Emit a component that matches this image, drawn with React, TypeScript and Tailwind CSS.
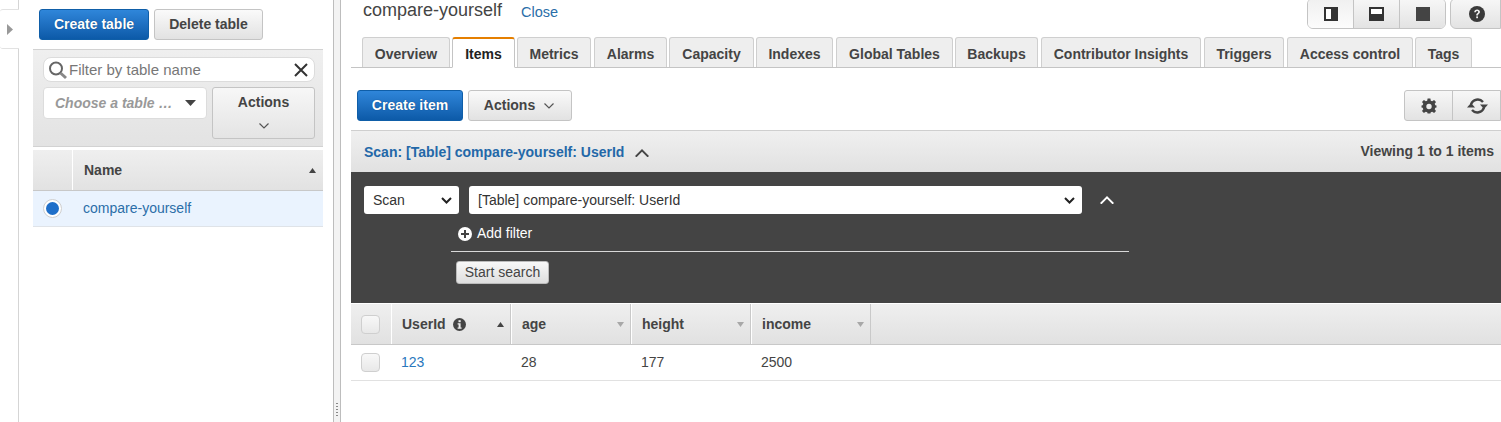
import React from "react";

const btnGrey = "rounded-[3px] border border-[#c4c4c4] bg-gradient-to-b from-[#fafafa] to-[#e2e2e2] font-bold text-[#444] text-[14px] flex items-center justify-center";
const btnBlue = "rounded-[3px] border border-[#0f5ea8] bg-gradient-to-b from-[#2f86da] to-[#0c5aa8] font-bold text-white text-[14px] flex items-center justify-center [text-shadow:0_0_1px_#003a70]";

const Chevron = ({ up = false, w = 11, color = "#555", sw = 1.5 }: { up?: boolean; w?: number; color?: string; sw?: number }) => (
  <svg width={w} height={w * 0.6} viewBox="0 0 10 6" fill="none">
    <path d={up ? "M0.5 5.5L5 1L9.5 5.5" : "M0.5 0.5L5 5L9.5 0.5"} stroke={color} strokeWidth={sw} />
  </svg>
);

const Caret = ({ up = false, color = "#444" }: { up?: boolean; color?: string }) => (
  <svg width="9" height="5" viewBox="0 0 9 5">
    <path d={up ? "M4.5 0L8 5H1Z" : "M1 0H8L4.5 5Z"} fill={color} />
  </svg>
);

const tabs: [string, number, number][] = [
  ["Overview", 88, 2],
  ["Items", 63, 2],
  ["Metrics", 74, 3],
  ["Alarms", 73, 2],
  ["Capacity", 85, 2],
  ["Indexes", 77, 3],
  ["Global Tables", 117, 2],
  ["Backups", 83, 3],
  ["Contributor Insights", 160, 3],
  ["Triggers", 80, 3],
  ["Access control", 126, 2],
  ["Tags", 57, 0],
];

const Th = ({ label, w, info = false, active = false }: { label: string; w: number; info?: boolean; active?: boolean }) => (
  <div style={{ width: w }} className="h-full flex items-center pl-[10px] pr-[5px] border-r border-r-[#c9c9c9] border-l border-l-white font-bold text-[#444] text-[14px]">
    <span>{label}</span>
    {info && (
      <svg className="ml-[7px]" width="13" height="13" viewBox="0 0 13 13">
        <circle cx="6.5" cy="6.5" r="6.5" fill="#444" />
        <rect x="5.5" y="2.2" width="2.2" height="2" fill="#eee" />
        <path d="M4.6 5.3H7.6V9.5H8.6V10.7H4.6V9.5H5.6V6.5H4.6Z" fill="#eee" />
      </svg>
    )}
    <span className="ml-auto flex">
      <Caret up={active} color={active ? "#444" : "#a8a8a8"} />
    </span>
  </div>
);

const Checkbox = () => (
  <div className="w-[19px] h-[19px] rounded-[4px] border border-[#cfcfcf] bg-gradient-to-b from-[#f8f8f8] to-[#e8e8e8]" />
);

export default function App() {
  return (
    <div className="w-[1501px] h-[422px] overflow-hidden bg-white flex font-['Liberation_Sans',Arial,sans-serif] text-[14px] text-[#444]">
      {/* nav strip */}
      <div className="w-[19px] h-full border-r border-[#d5d5d5] shrink-0 pt-[9px]">
        <div className="w-[19px] h-[40px] bg-white border-y border-[#e2e2e2] rounded-l-[3px] flex items-center pl-[7px]">
          <svg width="6" height="11" viewBox="0 0 6 11"><path d="M0 0L6 5.5L0 11Z" fill="#999" /></svg>
        </div>
      </div>

      {/* left panel */}
      <div className="w-[314px] shrink-0 h-full">
        <div className="flex gap-[5px] pt-[9px] pl-[20px]">
          <button className={`${btnBlue} w-[110px] h-[31px]`}>Create table</button>
          <button className={`${btnGrey} w-[109px] h-[31px]`}>Delete table</button>
        </div>
        <div className="ml-[14px] w-[290px] mt-[9px] h-[98px] border-y border-[#d2d2d2] bg-gradient-to-b from-[#efefef] to-[#e3e3e3] pl-[10px] pr-[8px] pt-[7px]">
          <div className="h-[25px] bg-white rounded-[8px] border border-[#dcdcdc] flex items-center pl-[4px] pr-[6px]">
            <svg width="20" height="20" viewBox="0 0 20 20" fill="none">
              <circle cx="8" cy="8.5" r="6" stroke="#666" strokeWidth="2" />
              <path d="M12.5 13L18 18" stroke="#888" strokeWidth="3" />
            </svg>
            <span className="ml-[1px] mt-[1px] text-[15px] text-[#777]">Filter by table name</span>
            <svg className="ml-auto" width="14" height="14" viewBox="0 0 14 14"><path d="M1 1L13 13M13 1L1 13" stroke="#333" strokeWidth="2" /></svg>
          </div>
          <div className="flex gap-[5px] mt-[5px] items-start">
            <div className="w-[164px] h-[32px] bg-white rounded-[4px] border border-[#dcdcdc] flex items-center pl-[11px] pr-[10px] font-bold italic text-[#999]">
              <span>Choose a table …</span>
              <svg className="ml-auto" width="11" height="6" viewBox="0 0 11 6"><path d="M0 0H11L5.5 6Z" fill="#444" /></svg>
            </div>
            <button className="w-[103px] h-[52px] rounded-[3px] border border-[#c4c4c4] bg-gradient-to-b from-[#f7f7f7] to-[#e4e4e4] font-bold text-[#444] flex flex-col items-center pt-[4px]">
              <span>Actions</span>
              <span className="mt-[10px] flex"><Chevron w={10} sw={1.2} /></span>
            </button>
          </div>
        </div>
        <div className="ml-[14px] w-[290px] mt-[3px] h-[41px] flex items-stretch bg-gradient-to-b from-[#efefef] to-[#e2e2e2] border-b border-[#c8c8c8]">
          <div className="w-[40px] border-r border-white" />
          <div className="flex-1 flex items-center pl-[11px] pr-[6px] font-bold text-[#444]">
            <span>Name</span>
            <span className="ml-auto flex"><Caret up /></span>
          </div>
        </div>
        <div className="ml-[14px] w-[290px] h-[36px] bg-[#eaf3fe] border-b border-[#dfe3e8] flex items-center pl-[10px]">
          <div className="w-[19px] h-[19px] rounded-full bg-white border border-[#cfcfcf] flex items-center justify-center">
            <div className="w-[13px] h-[13px] rounded-full bg-[#1f6fc9]" />
          </div>
          <span className="ml-[21px] text-[#2a6ea8]">compare-yourself</span>
        </div>
      </div>

      {/* divider */}
      <div className="w-[8px] h-full shrink-0 border-x border-[#bdbdbd] bg-[#f3f3f3] flex flex-col items-center justify-end pb-[6px] gap-[2px]">
        {[0, 1, 2, 3, 4].map((i) => (
          <div key={i} className="w-[2px] h-[1px] bg-[#888]" />
        ))}
      </div>

      {/* main */}
      <div className="flex-1 min-w-0 pl-[10px]">
        <div className="h-[37px] flex items-start pl-[12px]">
          <span className="text-[18px] leading-[20px] text-[#444]">compare-yourself</span>
          <span className="ml-[19px] mt-[4px] text-[14.5px] leading-[17px] text-[#2a6ea8]">Close</span>
          <div className="ml-auto flex -mt-[2px]">
            <div className="flex h-[31px] w-[139px] rounded-[6px] border border-[#c4c4c4] overflow-hidden">
              <div className="w-[46px] flex items-center justify-center border-r border-[#c4c4c4] bg-gradient-to-b from-[#f0f0f0] to-[#fcfcfc]">
                <svg width="14" height="14" viewBox="0 0 14 14"><path d="M0 0H14V14H0Z" fill="#333" /><rect x="2" y="2" width="5" height="10" fill="#fff" /></svg>
              </div>
              <div className="w-[46px] flex items-center justify-center border-r border-[#c4c4c4] bg-gradient-to-b from-[#f7f7f7] to-[#e3e3e3]">
                <svg width="15" height="14" viewBox="0 0 15 14"><path d="M0 0H15V14H0Z" fill="#333" /><rect x="2" y="2" width="11" height="5" fill="#fff" /></svg>
              </div>
              <div className="flex-1 flex items-center justify-center bg-gradient-to-b from-[#f7f7f7] to-[#e3e3e3]">
                <div className="w-[14px] h-[14px] bg-[#444]" />
              </div>
            </div>
            <div className="ml-[4px] w-[51px] h-[31px] shrink-0 rounded-l-[6px] border border-[#c4c4c4] bg-gradient-to-b from-[#f7f7f7] to-[#e3e3e3] flex items-center pl-[18px]">
              <svg width="16" height="16" viewBox="0 0 16 16">
                <circle cx="8" cy="8" r="8" fill="#3a3a3a" />
                <path d="M5.2 6.2C5.3 4.6 6.5 3.6 8.1 3.6C9.8 3.6 11 4.6 11 6C11 7.9 8.9 7.8 8.9 9.6H7.2C7.2 7.2 9.1 7.3 9.1 6.1C9.1 5.5 8.7 5.1 8 5.1C7.4 5.1 7 5.5 6.9 6.2Z" fill="#eee" />
                <rect x="7.2" y="10.4" width="1.8" height="1.8" fill="#eee" />
              </svg>
            </div>
          </div>
        </div>

        {/* tabs */}
        <div className="h-[31px] border-b border-[#c4c4c4] flex pl-[11px] items-start">
          {tabs.map(([label, w, gap]) => {
            const active = label === "Items";
            return (
              <div
                key={label}
                style={{ width: w, marginRight: gap }}
                className={
                  active
                    ? "h-[31px] shrink-0 bg-white border border-[#c4c4c4] border-b-white border-t-2 border-t-[#e57f00] rounded-t-[3px] flex items-center justify-center pt-[3px] font-bold text-[#222] text-[14px] relative z-10"
                    : "h-[30px] shrink-0 bg-[#eee] border border-[#cfcfcf] border-b-0 rounded-t-[3px] flex items-center justify-center pt-[3px] font-bold text-[#444] text-[14px]"
                }
              >
                {label}
              </div>
            );
          })}
        </div>

        {/* toolbar */}
        <div className="h-[62px] flex items-start pt-[22px] pl-[6px]">
          <button className={`${btnBlue} w-[106px] h-[31px]`}>Create item</button>
          <button className={`${btnGrey} ml-[5px] w-[104px] h-[31px] pr-[2px]`}>
            Actions<span className="ml-[9px] flex"><Chevron w={10} sw={1.2} /></span>
          </button>
          <div className="ml-auto flex h-[31px] w-[97px] rounded-l-[3px] border border-[#c4c4c4] bg-gradient-to-b from-[#f7f7f7] to-[#e3e3e3]">
            <div className="w-[48px] border-r border-[#c4c4c4] flex items-center justify-center">
              <svg width="16" height="16" viewBox="0 0 16 16">
                <path fill="#444" fillRule="evenodd" d="M6.6 0.5H9.4L9.8 2.7L11.2 3.3L13.1 2L15 3.9L13.7 5.8L14.3 7.2L15.5 7.6V9.4L14.3 9.8L13.7 11.2L15 13.1L13.1 15L11.2 13.7L9.8 14.3L9.4 15.5H6.6L6.2 14.3L4.8 13.7L2.9 15L1 13.1L2.3 11.2L1.7 9.8L0.5 9.4V7.6L1.7 7.2L2.3 5.8L1 3.9L2.9 2L4.8 3.3L6.2 2.7ZM8 5.8A2.7 2.7 0 1 0 8 11.2A2.7 2.7 0 1 0 8 5.8Z" />
              </svg>
            </div>
            <div className="flex-1 flex items-center justify-center pl-[2px]">
              <svg width="21" height="18" viewBox="0 0 21 18" fill="none">
                <path d="M4 7.5A7 7 0 0 1 16 5" stroke="#444" strokeWidth="2.4" />
                <path d="M17 10.5A7 7 0 0 1 5 13" stroke="#444" strokeWidth="2.4" />
                <path d="M13 7.5H21L17 12Z" fill="#444" />
                <path d="M0 10.5H8L4 6Z" fill="#444" />
              </svg>
            </div>
          </div>
        </div>

        {/* scan bar */}
        <div className="h-[42px] border-t border-[#cfcfcf] bg-gradient-to-b from-[#f0f0f0] to-[#e1e1e1] flex items-center pl-[13px] pr-[7px] font-bold">
          <span className="text-[#2368a8] text-[14px] mt-[2px]">Scan: [Table] compare-yourself: UserId</span>
          <span className="ml-[11px] mt-[3px] flex"><Chevron up w={14} color="#444" sw={1.4} /></span>
          <span className="ml-auto text-[#444] text-[14px]">Viewing 1 to 1 items</span>
        </div>

        {/* dark panel */}
        <div className="h-[131px] bg-[#444] pt-[14px] pl-[13px]">
          <div className="flex items-center">
            <div className="w-[95px] h-[28px] bg-white rounded-[3px] flex items-center pl-[9px] pr-[7px] text-[#333]">
              <span>Scan</span>
              <svg className="ml-auto" width="11" height="7" viewBox="0 0 11 7" fill="none"><path d="M1 1L5.5 5.5L10 1" stroke="#222" strokeWidth="2" /></svg>
            </div>
            <div className="ml-[10px] w-[613px] h-[28px] bg-white rounded-[3px] flex items-center pl-[9px] pr-[7px] text-[#333]">
              <span>[Table] compare-yourself: UserId</span>
              <svg className="ml-auto" width="11" height="7" viewBox="0 0 11 7" fill="none"><path d="M1 1L5.5 5.5L10 1" stroke="#222" strokeWidth="2" /></svg>
            </div>
            <span className="ml-[18px] flex"><Chevron up w={14} color="#fff" sw={1.4} /></span>
          </div>
          <div className="ml-[87px] w-[678px] mt-[9px] h-[29px] border-b border-[#d8d8d8] flex items-start pl-[7px] text-white">
            <svg className="mt-[4px]" width="14" height="14" viewBox="0 0 14 14">
              <circle cx="7" cy="7" r="7" fill="#fff" />
              <path d="M6 3H8V6H11V8H8V11H6V8H3V6H6Z" fill="#444" />
            </svg>
            <span className="ml-[5px]">Add filter</span>
          </div>
          <button className="ml-[92px] mt-[9px] w-[93px] h-[23px] rounded-[3px] border border-[#bbb] bg-gradient-to-b from-[#f8f8f8] to-[#dedede] text-[#444] text-[14px] flex items-center justify-center">
            Start search
          </button>
        </div>

        {/* table */}
        <div className="h-[41px] mt-[1px] flex items-stretch bg-gradient-to-b from-[#efefef] to-[#e1e1e1] border-b border-[#c8c8c8]">
          <div className="w-[40px] flex items-center pl-[10px]"><Checkbox /></div>
          <Th label="UserId" w={120} info active />
          <Th label="age" w={120} />
          <Th label="height" w={120} />
          <Th label="income" w={120} />
        </div>
        <div className="h-[36px] border-b border-[#e1e1e1] flex items-center text-[#444]">
          <div className="w-[40px] pl-[10px]"><Checkbox /></div>
          <div className="w-[120px] pl-[10px] text-[#2a78bd]">123</div>
          <div className="w-[120px] pl-[10px]">28</div>
          <div className="w-[120px] pl-[10px]">177</div>
          <div className="w-[120px] pl-[10px]">2500</div>
        </div>
      </div>
    </div>
  );
}
